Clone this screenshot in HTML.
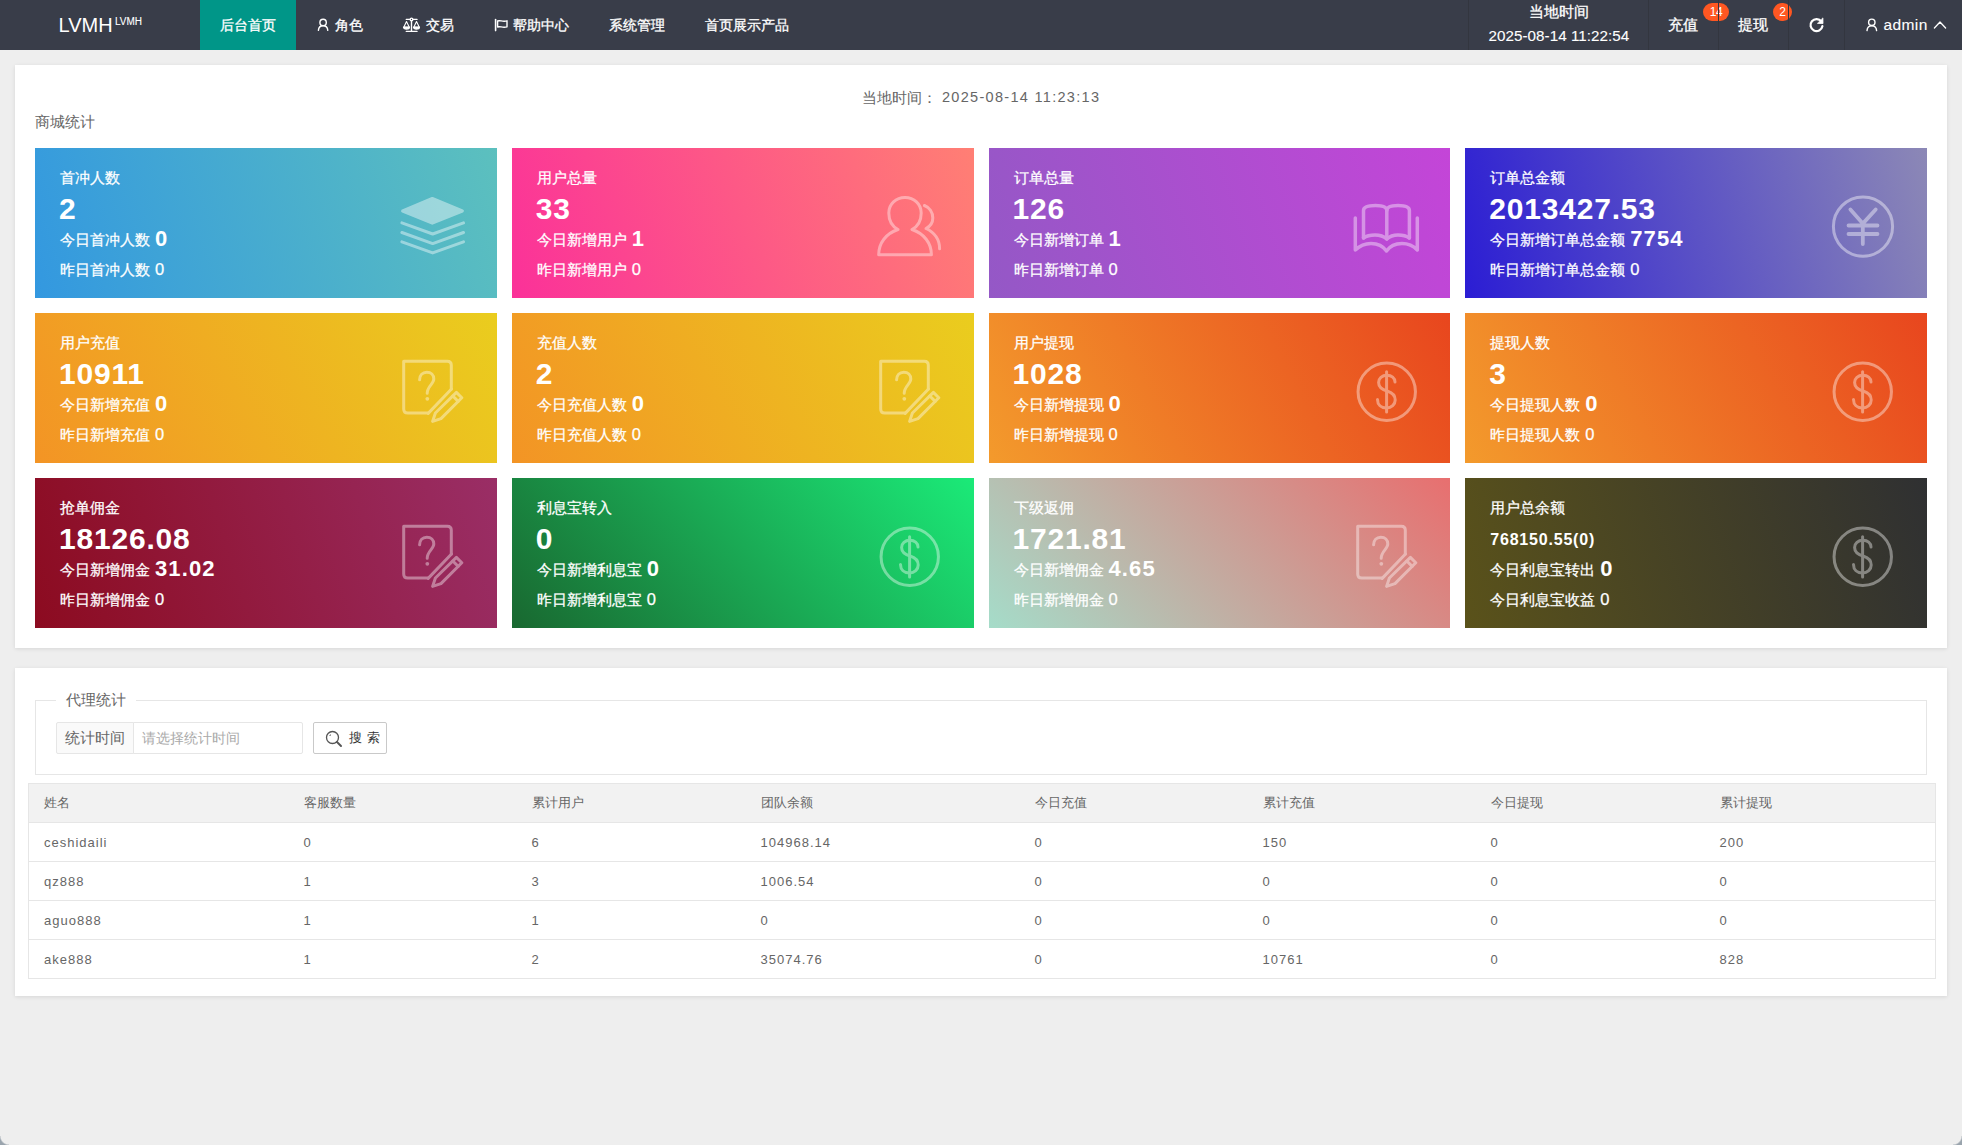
<!DOCTYPE html>
<html><head><meta charset="utf-8">
<style>
*{box-sizing:border-box;margin:0;padding:0}
html,body{width:1962px;height:1145px;overflow:hidden}
body{background:#eeeeee;font-family:"Liberation Sans",sans-serif;font-size:14px;color:#666;position:relative}
.hd{position:absolute;left:0;top:0;width:1962px;height:50px;background:#393D49;color:#fff}
.hd .t{position:absolute;white-space:nowrap;line-height:1;-webkit-text-stroke:0.3px #fff}
.hd .sep{position:absolute;top:0;width:1px;height:50px;background:#33363f}
.nav-act{position:absolute;left:200px;top:0;width:96px;height:50px;background:#009688}
.badge{position:absolute;height:18px;border-radius:9px;background:#FF5722;color:#fff;font-size:12px;line-height:18px;text-align:center;letter-spacing:-0.3px}
.panel{position:absolute;left:15px;width:1932px;background:#fff;box-shadow:0 1px 4px rgba(0,0,0,.1)}
.p1{top:65px;height:583px}
.p2{top:668px;height:328px}
.card{position:absolute;width:461.75px;height:150px;color:#fff;overflow:hidden;-webkit-text-stroke:0.25px #fff}
.card .c-t{position:absolute;left:25px;top:21.5px;font-size:14.5px;line-height:16px;white-space:nowrap}
.card .c-n{-webkit-text-stroke:0;position:absolute;left:24px;top:46px;font-size:30px;font-weight:bold;line-height:30px;white-space:nowrap;letter-spacing:0.8px}
.card .c-d{position:absolute;left:25px;top:80px;font-size:14.5px;line-height:22px;white-space:nowrap}
.card .c-d b{-webkit-text-stroke:0;font-size:22px;font-weight:bold;margin-left:5px;vertical-align:-1px;letter-spacing:1.1px}
.card .c-y{position:absolute;left:25px;top:113px;font-size:14.5px;line-height:16px;white-space:nowrap}
.card .c-y span{font-size:16.5px;margin-left:1px}
.card svg{position:absolute}

.fs{position:absolute;left:35px;top:700px;width:1892px;height:75px;border:1px solid #e6e6e6}
.legend{position:absolute;left:56px;top:692px;padding:0 10px;background:#fff;font-size:14.5px;line-height:16px;color:#666;white-space:nowrap}
.lbl{position:absolute;left:56px;top:722px;width:78px;height:32px;border:1px solid #e6e6e6;background:#fafafa;font-size:14.5px;line-height:30px;padding-left:8px;color:#666;white-space:nowrap;border-radius:2px 0 0 2px}
.inp{position:absolute;left:133px;top:722px;width:170px;height:32px;border:1px solid #e6e6e6;background:#fff;font-size:14px;line-height:30px;padding-left:8px;color:#aaa;white-space:nowrap;border-radius:0 2px 2px 0}
.btn{position:absolute;left:313px;top:722px;width:74px;height:32px;border:1px solid #c9c9c9;background:#fff;border-radius:2px;color:#333;font-size:12.5px;line-height:30px;white-space:nowrap}
.btn span{position:absolute;left:35px;top:0;letter-spacing:0.6px}
.tb{position:absolute;left:28px;top:783px;width:1906px;border-collapse:collapse;table-layout:fixed;border:1px solid #e6e6e6}
.tb th,.tb td{height:39px;padding:0 15px;text-align:left;font-weight:normal;font-size:13px;color:#666;border-bottom:1px solid #e6e6e6;white-space:nowrap}
.tb th{background:#f2f2f2;color:#666}
.tb td{letter-spacing:1px}
.card .c-n.small{font-size:16px;top:46.5px;left:25px;letter-spacing:0.8px}
</style></head>
<body>
<svg width="0" height="0" style="position:absolute">
<defs>
<symbol id="i-layers" viewBox="0 0 80 80">
  <g fill="none" stroke="#fff" opacity="0.42" stroke-width="3" stroke-linecap="round" stroke-linejoin="round">
    <polygon points="12.6,26 42.3,13.4 72.4,26 42.3,38.2" fill="#fff"/>
    <polyline points="11.9,37.9 42.7,49 73.5,37.9"/>
    <polyline points="11.9,47.5 42.7,58.6 73.5,47.5"/>
    <polyline points="11.9,56.8 42.7,67.9 73.5,56.8"/>
  </g>
</symbol>
<symbol id="i-users" viewBox="0 0 80 80">
  <g fill="none" stroke="#fff" opacity="0.4" stroke-width="3" stroke-linecap="round" stroke-linejoin="round" transform="translate(-2,0)">
    <path d="M33 44.5 C26.5 41 23.8 34.5 23.8 28 C23.8 19 31 12.6 40 12.6 C49 12.6 56.2 19 56.2 28 C56.2 34.5 53.5 41 47 44.5 C59 48.5 66.4 58 66.4 69.8 L13.7 69.8 C13.7 58 21 48.5 33 44.5 Z"/>
    <path d="M59.4 20.5 C64.5 22.5 67.8 27.5 67.8 33 C67.8 37.5 65 41.5 61 43.5 C69.5 47.5 74.6 55 74.6 63.8"/>
  </g>
</symbol>
<symbol id="i-book" viewBox="0 0 80 80">
  <g fill="none" stroke="#fff" opacity="0.4" stroke-width="3.5" stroke-linecap="round" stroke-linejoin="round" transform="translate(-4,5)">
    <path d="M15.3 28 L15.3 60 C20 55.5 26 53.5 31 53.5 C37 53.5 43 56 46.5 61 C50 56 56 53.5 62 53.5 C67 53.5 73 55.5 77.3 60 L77.3 28"/>
    <path d="M23.5 48 L23.5 20.5 C23.5 17 29 15.5 35.5 15.5 C41.5 15.5 46.8 17 46.8 20.5 C46.8 17 52 15.5 58 15.5 C64.5 15.5 69.4 17 69.4 20.5 L69.4 48"/>
    <path d="M46.8 20.5 L46.8 49"/>
    <path d="M23.5 48 C27 45.5 31 45 35 45 C40 45 44 46.5 46.8 49 C49.5 46.5 53.5 45 58 45 C62 45 66 45.5 69.4 48"/>
  </g>
</symbol>
<symbol id="i-yen" viewBox="0 0 80 80">
  <g fill="none" stroke="#fff" opacity="0.42" stroke-linecap="round" stroke-linejoin="round">
    <circle cx="43" cy="41.6" r="29.6" stroke-width="3"/>
    <path d="M30.4 24.5 L42.8 38.6 L55.7 24.5 M28.5 40.5 H57.5 M28.5 49 H57.5 M42.8 38.6 V59" stroke-width="3.8"/>
  </g>
</symbol>
<symbol id="i-note" viewBox="0 0 80 80">
  <g fill="none" stroke="#fff" opacity="0.4" stroke-width="3" stroke-linecap="round" stroke-linejoin="round">
    <path d="M37.9 63 L17.7 63 Q13.7 63 13.7 59 L13.7 11.2 L57.3 11.2 Q61.3 11.2 61.3 15.2 L61.3 39"/>
    <path d="M61.5 39 L38.2 63.4"/>
    <path d="M66.4 42.4 L71.8 47.8 L51 68.6 L42.6 71.4 L45.4 63 Z"/>
    <path d="M62.8 46 L68.2 51.4"/>
    <path d="M29.6 29.8 C29.6 25.2 32.6 22.2 36.8 22.2 C41 22.2 43.8 25 43.8 29 C43.8 34 37.2 36.2 37.2 43.2"/>
    <circle cx="37.3" cy="48.8" r="1.9" fill="#fff" stroke="none"/>
  </g>
</symbol>
<symbol id="i-dollar" viewBox="0 0 80 80">
  <g fill="none" stroke="#fff" opacity="0.4" stroke-width="3" stroke-linecap="round" stroke-linejoin="round" transform="translate(1,0)">
    <circle cx="41.75" cy="41.75" r="28.7"/>
    <path d="M41.6 21.8 V62.1"/>
    <path d="M50 32 C50 28 46.5 25.3 42 25.3 C37 25.3 33.6 28.5 33.6 32.5 C33.6 37 37 39.5 42 41 C47 42.5 50.2 45.5 50.2 50 C50.2 54.5 46.5 57.9 41.5 57.9 C36 57.9 32.5 54.5 32.5 49.5"/>
  </g>
</symbol>
</defs></svg>

<div class="hd">
  <div class="t" style="left:58.5px;top:15px;font-size:20px;-webkit-text-stroke:0">LVMH</div>
  <div class="t" style="left:115px;top:17px;font-size:10px;-webkit-text-stroke:0.1px #fff">LVMH</div>
  <div class="nav-act"></div>
  <div class="t" style="left:220px;top:18px;font-size:14px;">后台首页</div>
  <div class="t" style="left:335px;top:18px;font-size:14px;">角色</div>
  <div class="t" style="left:426px;top:18px;font-size:14px;">交易</div>
  <div class="t" style="left:513px;top:18px;font-size:14px;">帮助中心</div>
  <div class="t" style="left:609px;top:18px;font-size:14px;">系统管理</div>
  <div class="t" style="left:705px;top:18px;font-size:14px;">首页展示产品</div>

  <div class="sep" style="left:1468px"></div>
  <div class="t" style="left:1529px;top:5px;font-size:14.5px;">当地时间</div>
  <div class="t" style="left:1488.5px;top:27.5px;font-size:15.2px;letter-spacing:0.05px;-webkit-text-stroke:0.1px #fff">2025-08-14 11:22:54</div>
  <div class="sep" style="left:1648px"></div>
  <div class="t" style="left:1668px;top:17.5px;font-size:14.5px;">充值</div>
  <div class="badge" style="left:1703px;top:3px;width:26px;">14</div>
  <div class="sep" style="left:1718px"></div>
  <div class="t" style="left:1738px;top:17.5px;font-size:14.5px;">提现</div>
  <div class="badge" style="left:1773px;top:3px;width:19px;">2</div>
  <div class="sep" style="left:1788px"></div>
  <div class="sep" style="left:1844px"></div>
  <div class="t" style="left:1883.5px;top:16.5px;font-size:15.5px;letter-spacing:0.4px;-webkit-text-stroke:0.1px #fff">admin</div>
  <svg style="position:absolute;left:0;top:0" width="1962" height="50">
    <g fill="none" stroke="#fff" stroke-width="1.4" stroke-linecap="round" stroke-linejoin="round">
      <circle cx="323.1" cy="22.4" r="3.2"/>
      <path d="M318.4 30.4 C318.6 27.6 320.6 25.8 323.1 25.8 C325.6 25.8 327.6 27.6 327.8 30.4"/>
      <path d="M406.3 19.4 H417 M411.5 20.6 V31.3 M406.3 31.4 H417"/>
      <circle cx="411.5" cy="19.4" r="1.3" fill="#393D49"/>
      <path d="M406.5 21.6 L403.8 27.3 H409.3 Z M416.5 21.6 L413.8 27.3 H419.3 Z" stroke-width="1.1"/>
      <path d="M403.6 27.3 C403.8 29.5 409.1 29.5 409.4 27.3 Z M413.6 27.3 C413.8 29.5 419.1 29.5 419.4 27.3 Z" fill="#fff"/>
      <path d="M495.6 19.5 V30.6" stroke-width="1.6"/>
      <path d="M497.6 21 C500 19.8 502.5 22.2 507 20.8 V26.8 C502.5 28.2 500 25.8 497.6 27 Z" stroke-width="1.4"/>
      <path d="M1821.4 21.6 A6 6 0 1 0 1822.4 26.2" stroke-width="2.2"/>
      <path d="M1822.9 18.3 L1823 23.6 L1817.8 23.4 Z" fill="#fff" stroke-width="0.8"/>
      <circle cx="1871.8" cy="22.3" r="3.2"/>
      <path d="M1867 30.6 C1867.2 27.8 1869.2 25.9 1871.8 25.9 C1874.4 25.9 1876.4 27.8 1876.6 30.6"/>
      <path d="M1934.4 28 L1940 22 L1945.6 28" stroke-width="1.3"/>
    </g>
  </svg>

</div>

<div class="panel p1"></div>
<div class="panel p2"></div>

<div style="position:absolute;left:861.5px;top:89px;font-size:14.5px;color:#666;white-space:nowrap">当地时间：</div><div style="position:absolute;left:942px;top:89px;font-size:14.5px;letter-spacing:1.3px;color:#666;white-space:nowrap">2025-08-14 11:23:13</div>
<div style="position:absolute;left:35px;top:113px;font-size:14.5px;color:#666;white-space:nowrap">商城统计</div>
<div class="card" style="left:35px;top:148px;background:linear-gradient(72deg,#3398E0,#5CC0BE)">
  <div class="c-t">首冲人数</div>
  <div class="c-n">2</div>
  <div class="c-d">今日首冲人数<b>0</b></div>
  <div class="c-y">昨日首冲人数 <span>0</span></div>
  <svg class="ic" width="80" height="80" viewBox="0 0 80 80" style="left:355px;top:37px"><use href="#i-layers"/></svg>
</div>
<div class="card" style="left:511.75px;top:148px;background:linear-gradient(70deg,#FB3199,#FF7F74)">
  <div class="c-t">用户总量</div>
  <div class="c-n">33</div>
  <div class="c-d">今日新增用户<b>1</b></div>
  <div class="c-y">昨日新增用户 <span>0</span></div>
  <svg class="ic" width="80" height="80" viewBox="0 0 80 80" style="left:355px;top:37px"><use href="#i-users"/></svg>
</div>
<div class="card" style="left:988.5px;top:148px;background:linear-gradient(72deg,#9458C6,#C445D8)">
  <div class="c-t">订单总量</div>
  <div class="c-n">126</div>
  <div class="c-d">今日新增订单<b>1</b></div>
  <div class="c-y">昨日新增订单 <span>0</span></div>
  <svg class="ic" width="80" height="80" viewBox="0 0 80 80" style="left:355px;top:37px"><use href="#i-book"/></svg>
</div>
<div class="card" style="left:1465.25px;top:148px;background:linear-gradient(75deg,#2B1DD4,#8C88B6)">
  <div class="c-t">订单总金额</div>
  <div class="c-n">2013427.53</div>
  <div class="c-d">今日新增订单总金额<b>7754</b></div>
  <div class="c-y">昨日新增订单总金额 <span>0</span></div>
  <svg class="ic" width="80" height="80" viewBox="0 0 80 80" style="left:355px;top:37px"><use href="#i-yen"/></svg>
</div>
<div class="card" style="left:35px;top:313px;background:linear-gradient(62deg,#F39425,#EACD1E)">
  <div class="c-t">用户充值</div>
  <div class="c-n">10911</div>
  <div class="c-d">今日新增充值<b>0</b></div>
  <div class="c-y">昨日新增充值 <span>0</span></div>
  <svg class="ic" width="80" height="80" viewBox="0 0 80 80" style="left:355px;top:37px"><use href="#i-note"/></svg>
</div>
<div class="card" style="left:511.75px;top:313px;background:linear-gradient(62deg,#F39425,#EACD1E)">
  <div class="c-t">充值人数</div>
  <div class="c-n">2</div>
  <div class="c-d">今日充值人数<b>0</b></div>
  <div class="c-y">昨日充值人数 <span>0</span></div>
  <svg class="ic" width="80" height="80" viewBox="0 0 80 80" style="left:355px;top:37px"><use href="#i-note"/></svg>
</div>
<div class="card" style="left:988.5px;top:313px;background:linear-gradient(62deg,#F39A2C,#E8461E)">
  <div class="c-t">用户提现</div>
  <div class="c-n">1028</div>
  <div class="c-d">今日新增提现<b>0</b></div>
  <div class="c-y">昨日新增提现 <span>0</span></div>
  <svg class="ic" width="80" height="80" viewBox="0 0 80 80" style="left:355px;top:37px"><use href="#i-dollar"/></svg>
</div>
<div class="card" style="left:1465.25px;top:313px;background:linear-gradient(62deg,#F39A2C,#E8461E)">
  <div class="c-t">提现人数</div>
  <div class="c-n">3</div>
  <div class="c-d">今日提现人数<b>0</b></div>
  <div class="c-y">昨日提现人数 <span>0</span></div>
  <svg class="ic" width="80" height="80" viewBox="0 0 80 80" style="left:355px;top:37px"><use href="#i-dollar"/></svg>
</div>
<div class="card" style="left:35px;top:478px;background:linear-gradient(72deg,#8C0B20,#9A2E66)">
  <div class="c-t">抢单佣金</div>
  <div class="c-n">18126.08</div>
  <div class="c-d">今日新增佣金<b>31.02</b></div>
  <div class="c-y">昨日新增佣金 <span>0</span></div>
  <svg class="ic" width="80" height="80" viewBox="0 0 80 80" style="left:355px;top:37px"><use href="#i-note"/></svg>
</div>
<div class="card" style="left:511.75px;top:478px;background:linear-gradient(48deg,#196830,#1BEA78)">
  <div class="c-t">利息宝转入</div>
  <div class="c-n">0</div>
  <div class="c-d">今日新增利息宝<b>0</b></div>
  <div class="c-y">昨日新增利息宝 <span>0</span></div>
  <svg class="ic" width="80" height="80" viewBox="0 0 80 80" style="left:355px;top:37px"><use href="#i-dollar"/></svg>
</div>
<div class="card" style="left:988.5px;top:478px;background:linear-gradient(45deg,#A5DCC9,#E86F6F)">
  <div class="c-t">下级返佣</div>
  <div class="c-n">1721.81</div>
  <div class="c-d">今日新增佣金<b>4.65</b></div>
  <div class="c-y">昨日新增佣金 <span>0</span></div>
  <svg class="ic" width="80" height="80" viewBox="0 0 80 80" style="left:355px;top:37px"><use href="#i-note"/></svg>
</div>
<div class="card" style="left:1465.25px;top:478px;background:linear-gradient(72deg,#5A521A,#2F3032)">
  <div class="c-t">用户总余额</div>
  <div class="c-n small">768150.55(0)</div>
  <div class="c-d">今日利息宝转出<b>0</b></div>
  <div class="c-y">今日利息宝收益 <span>0</span></div>
  <svg class="ic" width="80" height="80" viewBox="0 0 80 80" style="left:355px;top:37px"><use href="#i-dollar"/></svg>
</div>

<div class="fs"></div>
<div class="legend">代理统计</div>
<div class="lbl">统计时间</div>
<div class="inp">请选择统计时间</div>
<div class="btn"><svg width="18" height="18" viewBox="0 0 18 18" style="position:absolute;left:11px;top:7px"><circle cx="7.5" cy="7.5" r="6" fill="none" stroke="#555" stroke-width="1.3"/><path d="M12 12 L16 16" stroke="#555" stroke-width="2" stroke-linecap="round"/><path d="M4.6 6 A3.2 3.2 0 0 1 6 4.6" fill="none" stroke="#555" stroke-width="1"/></svg><span>搜 索</span></div>
<table class="tb"><colgroup><col style="width:260px"><col style="width:228px"><col style="width:229px"><col style="width:274px"><col style="width:228px"><col style="width:228px"><col style="width:229px"><col style="width:231px"></colgroup><thead><tr><th>姓名</th><th>客服数量</th><th>累计用户</th><th>团队余额</th><th>今日充值</th><th>累计充值</th><th>今日提现</th><th>累计提现</th></tr></thead><tbody><tr><td>ceshidaili</td><td>0</td><td>6</td><td>104968.14</td><td>0</td><td>150</td><td>0</td><td>200</td></tr><tr><td>qz888</td><td>1</td><td>3</td><td>1006.54</td><td>0</td><td>0</td><td>0</td><td>0</td></tr><tr><td>aguo888</td><td>1</td><td>1</td><td>0</td><td>0</td><td>0</td><td>0</td><td>0</td></tr><tr><td>ake888</td><td>1</td><td>2</td><td>35074.76</td><td>0</td><td>10761</td><td>0</td><td>828</td></tr></tbody></table>



<div style="position:absolute;left:0;top:1136px;width:9px;height:9px;background:radial-gradient(circle at 100% 0,rgba(0,0,0,0) 8px,#9aa4ad 9.5px)"></div>
<div style="position:absolute;left:1953px;top:1136px;width:9px;height:9px;background:radial-gradient(circle at 0 0,rgba(0,0,0,0) 8px,#9aa4ad 9.5px)"></div>
</body></html>
